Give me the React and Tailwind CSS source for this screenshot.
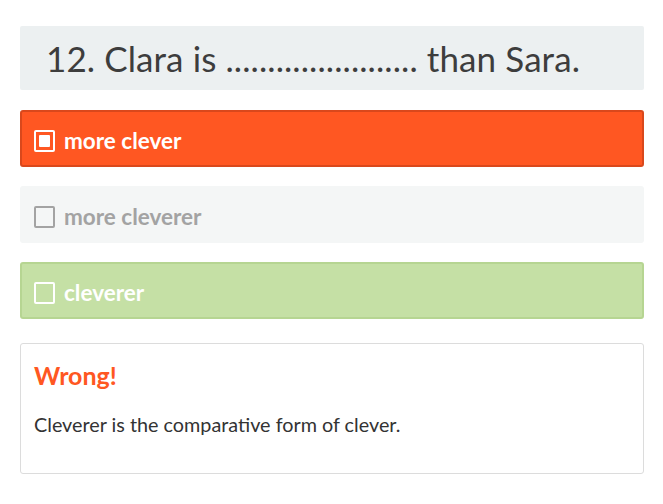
import React from 'react';

const Box = ({ checked, tone }) => (
    <span
        className={`w-[21px] h-[22px] rounded-[2px] border-2 flex items-center justify-center shrink-0 ${tone}`}
    >
        {checked && <span className="w-[11px] h-[12px] bg-white rounded-[1px]" />}
    </span>
);

const options = [
    { label: 'more clever', checked: true, wrap: 'bg-[#ff5722] border-[#d9481c] text-white', box: 'border-white' },
    { label: 'more cleverer', checked: false, wrap: 'bg-[#f4f6f6] border-[#f4f6f6] text-[#a3a3a3]', box: 'border-[#a3a3a3]' },
    { label: 'cleverer', checked: false, wrap: 'bg-[#c5e0a5] border-[#b6d592] text-white', box: 'border-white' },
];

export default function App() {
    return (
        <div className="min-h-[504px] bg-white pl-[20px] pr-[19px] pt-[26px] font-['Lato','Noto_Sans',sans-serif]">
            <div className="bg-[#ecf0f1] rounded-[2px] h-[64px] flex items-center px-[26px]">
                <h2 className="text-[35px] text-[#3d3d3d] leading-none tracking-[0.1px]">
                    12. Clara is ....................... than Sara.
                </h2>
            </div>

            <div className="mt-[20px] flex flex-col gap-[19px]">
                {options.map((o) => (
                    <div
                        key={o.label}
                        className={`h-[57px] rounded-[3px] border-2 flex items-center gap-[9px] px-[12px] pt-[4px] ${o.wrap}`}
                    >
                        <Box checked={o.checked} tone={o.box} />
                        <span className="text-[22.5px] font-bold">{o.label}</span>
                    </div>
                ))}
            </div>

            <div className="mt-[24px] h-[131px] border border-[#dcdcdc] rounded-[3px] px-[13px] pt-[16px]">
                <h3 className="text-[25px] font-bold text-[#ff5722] leading-[30px]">Wrong!</h3>
                <p className="mt-[22px] text-[19.8px] text-[#333] leading-[24px]">
                    Cleverer is the comparative form of clever.
                </p>
            </div>
        </div>
    );
}
